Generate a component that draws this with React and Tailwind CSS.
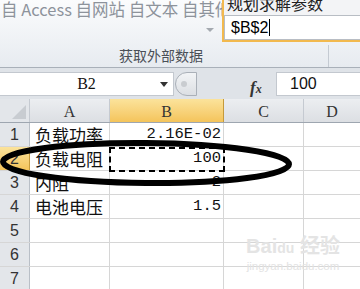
export default function App() {
  const cjk = { fontFamily: '"Noto Sans CJK SC", "Liberation Sans", sans-serif' };
  const rows = [
    { n: "1", a: "负载功率", b: "2.16E-02" },
    { n: "2", a: "负载电阻", b: "100", sel: true },
    { n: "3", a: "内阻", b: "2" },
    { n: "4", a: "电池电压", b: "1.5" },
    { n: "5", a: "", b: "" },
    { n: "6", a: "", b: "" },
    { n: "7", a: "", b: "" },
  ];
  return (
    <div className="relative w-[360px] h-[289px] overflow-hidden bg-white" style={cjk}>
      {/* Ribbon */}
      <div className="relative h-[68px] bg-gradient-to-b from-[#fbfcfd] to-[#e7ebf0] border-b border-[#a9b0b9]">
        <div className="pl-[1px] pt-[0px] text-[16.5px] leading-[19px] text-[#8d939b] whitespace-nowrap">
          自 Access 自网站 自文本 自其他来
        </div>
        <div className="absolute left-[206px] top-[28px] w-0 h-0 border-l-[4px] border-r-[4px] border-t-[4px] border-l-transparent border-r-transparent border-t-[#a4a9b0]" />
        <div className="absolute left-0 right-0 top-[45px] flex">
          <div className="w-[328px] text-center text-[14px] leading-[20px] text-[#4a4f57]">
            <span className="inline-block ml-[-6px]">获取外部数据</span>
          </div>
          <div className="w-[1px] h-[22px] bg-[#c4cad2]" />
        </div>
        {/* Popup dialog */}
        <div className="absolute left-[222px] top-0 w-[140px] h-[42px] bg-[#f3f4f6] border-l-2 border-b-2 border-[#f2b94e]">
          <div className="h-[15px] overflow-hidden">
            <div className="mt-[-8px] pl-[3px] text-[16px] leading-[22px] text-[#222]">规划求解参数</div>
          </div>
          <div className="h-[25px] bg-white border border-[#b8bdc4] flex items-center pl-[6px]">
            <span className="text-[16px] leading-none text-black" style={{ fontFamily: '"Liberation Sans", sans-serif' }}>$B$2</span>
            <span className="w-[1px] h-[17px] bg-black ml-[1px]" />
          </div>
        </div>
      </div>

      {/* Formula bar */}
      <div className="h-[31px] bg-[#dfe3e8] pt-[4px] flex">
        <div className="w-[174px] h-[24px] bg-white border-y border-r border-[#c3c8cf] relative flex items-center justify-center">
          <span className="text-[16px] text-[#111]" style={{ fontFamily: '"Liberation Serif", serif' }}>B2</span>
          <div className="absolute left-[160px] top-[9px] w-0 h-0 border-l-[4px] border-r-[4px] border-t-[5px] border-l-transparent border-r-transparent border-t-[#333]" />
        </div>
        <div className="w-[102px] h-[24px] relative flex items-center">
          <div className="ml-[1px] w-[22px] h-[24px] rounded-l-full bg-gradient-to-b from-[#f2f4f6] to-[#dcdfe3] border border-[#aab0b8] flex items-center pl-[5px]">
            <div className="w-[6px] h-[6px] rounded-full bg-[#c9ccd0]" />
          </div>
          <span className="absolute left-[76px] top-[3px] text-[17px] italic font-bold text-[#333]" style={{ fontFamily: '"Liberation Serif", serif' }}>
            f<span className="text-[12px]">x</span>
          </span>
        </div>
        <div className="flex-1 h-[24px] bg-white border-y border-l border-[#c3c8cf] flex items-center pl-[13px]">
          <span className="text-[16px] text-[#111]" style={{ fontFamily: '"Liberation Sans", sans-serif' }}>100</span>
        </div>
      </div>

      {/* Grid */}
      <div className="relative">
        <div className="flex h-[24px] bg-[#dfe3e8] border-b border-[#9ea6b0]" style={{ fontFamily: '"Liberation Serif", serif' }}>
          <div className="w-[30px] relative border-r border-[#c5cad1] bg-[#e3e6ea]">
            <div className="absolute right-[3px] bottom-[3px] w-0 h-0" style={{ borderBottom: "14px solid #c8ccd1", borderLeft: "14px solid transparent" }} />
          </div>
          <div className="w-[80px] flex items-center justify-center pt-[3px] bg-gradient-to-b from-[#eceef1] to-[#dcdfe3] border-r border-[#c5cad1] text-[16px] text-[#333]">A</div>
          <div className="w-[114px] flex items-center justify-center pt-[3px] bg-gradient-to-b from-[#fbe39b] to-[#f4c45a] border-r border-[#c59a3b] text-[16px] text-[#333]">B</div>
          <div className="w-[80px] flex items-center justify-center pt-[3px] bg-gradient-to-b from-[#eceef1] to-[#dcdfe3] border-r border-[#c5cad1] text-[16px] text-[#333]">C</div>
          <div className="flex-1 flex items-center justify-center pt-[3px] bg-gradient-to-b from-[#eceef1] to-[#dcdfe3] text-[16px] text-[#333]">D</div>
        </div>
        {rows.map((r) => (
          <div key={r.n} className="flex h-[24px] border-b border-[#d6d6d6]">
            <div
              className={
                r.sel
                  ? "w-[30px] flex items-center justify-center bg-gradient-to-b from-[#fbe39b] to-[#f4c45a] border-r border-[#c59a3b] text-[16px] text-[#333]"
                  : "w-[30px] flex items-center justify-center bg-[#e3e6ea] border-r border-[#b9bfc7] text-[16px] text-[#333]"
              }
              style={{ fontFamily: '"Liberation Sans", sans-serif' }}
            >
              {r.n}
            </div>
            <div className="w-[80px] border-r border-[#d6d6d6] flex items-center pl-[5px] text-[17px] leading-none text-[#111] whitespace-nowrap overflow-hidden">
              {r.a}
            </div>
            <div className="w-[114px] border-r border-[#d6d6d6] flex items-center justify-end pr-[2px] text-[15.5px] text-[#111] whitespace-nowrap" style={{ fontFamily: '"Liberation Mono", monospace' }}>
              {r.b}
            </div>
            <div className="w-[80px] border-r border-[#d6d6d6]" />
            <div className="flex-1" />
          </div>
        ))}

        {/* Marching ants around B2 */}
        <div className="absolute left-[109px] top-[48px] w-[116px] h-[25px] border-2 border-dashed border-black" />

        {/* Watermark */}
        <div className="absolute left-[240px] top-[136px] w-[106px] text-center pointer-events-none">
          <div className="text-[20px] leading-[22px] font-bold text-[#e4e4e4]" style={{ fontFamily: '"Liberation Sans", "Noto Sans CJK SC", sans-serif' }}>
            Bai<span className="text-[14px]">du</span> 经验
          </div>
          <div className="text-[11.5px] leading-[14px] text-[#e3e3e3]" style={{ fontFamily: '"Liberation Sans", sans-serif' }}>jingyan.baidu.com</div>
        </div>

        {/* Hand-drawn ellipse */}
        <svg className="absolute left-0 top-0 pointer-events-none" width="300" height="120" viewBox="0 0 300 120">
          <ellipse cx="146" cy="64" rx="143" ry="20" fill="none" stroke="#000" strokeWidth="6" transform="rotate(0.5 146 64)" />
        </svg>
      </div>
    </div>
  );
}
